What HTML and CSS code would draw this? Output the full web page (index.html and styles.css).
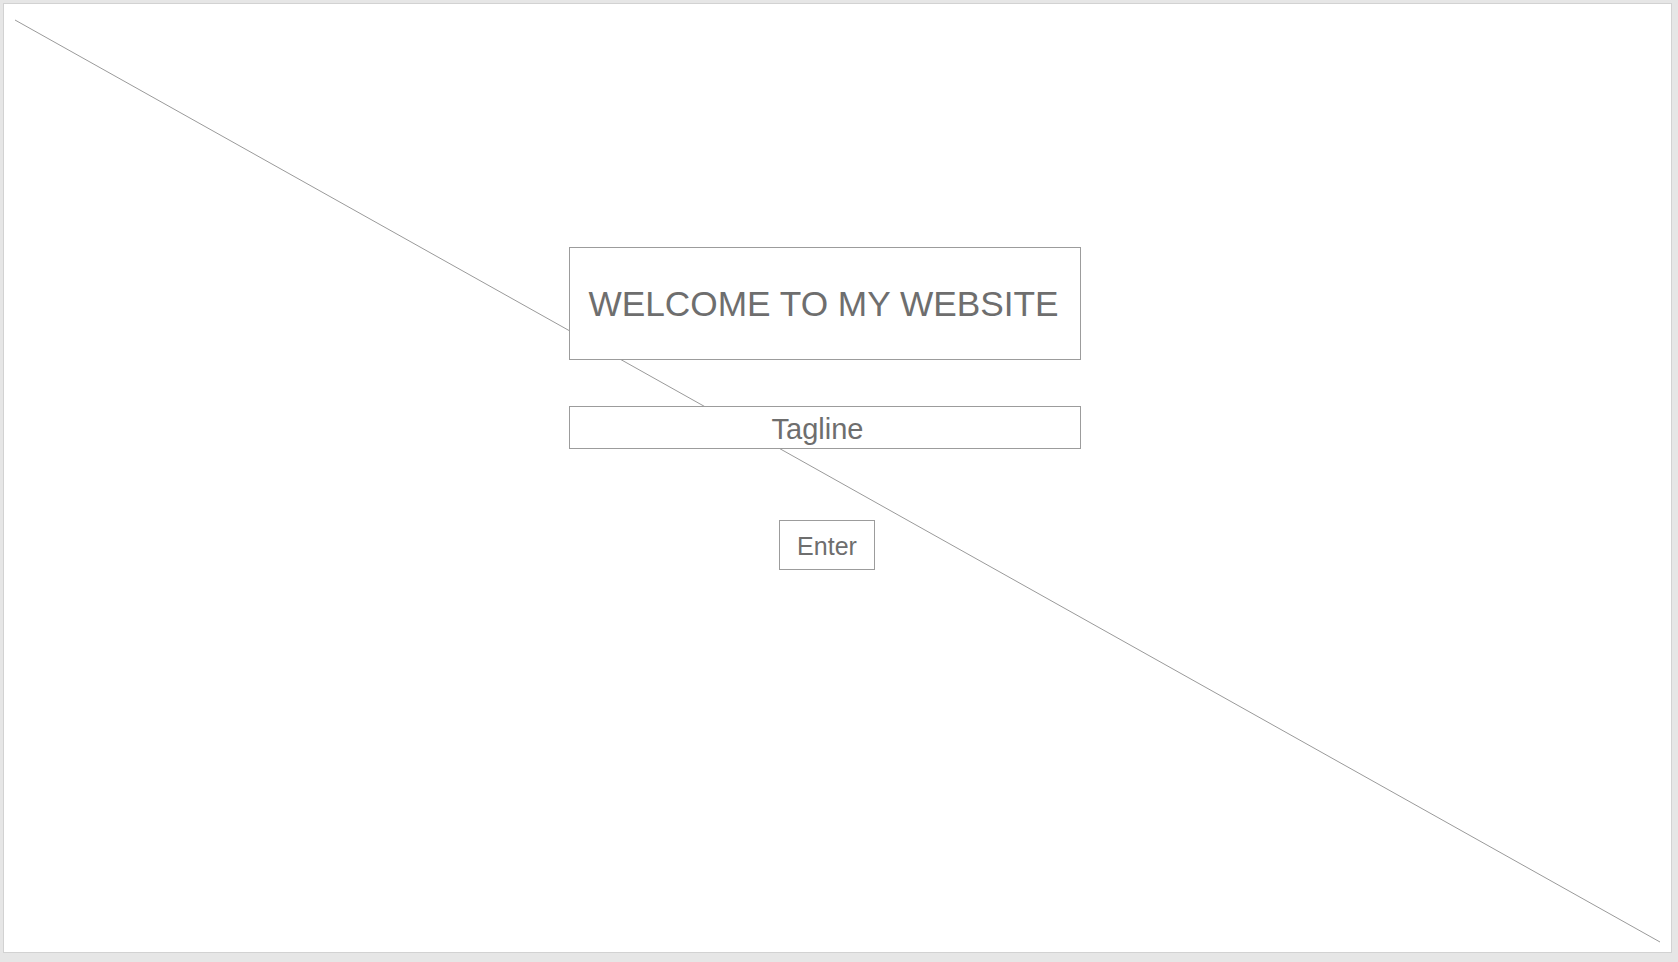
FILE: index.html
```html
<!DOCTYPE html>
<html lang="en">
<head>
<meta charset="utf-8">
<title>Welcome</title>
<link rel="stylesheet" href="styles.css">
</head>
<body>
<div class="frame">
  <svg class="diagonal" width="1666" height="948" viewBox="0 0 1666 948" aria-hidden="true">
    <line x1="11" y1="16" x2="1656" y2="938" stroke="#9a9a9a" stroke-width="1"/>
  </svg>
  <div class="column">
    <div class="title-box">WELCOME TO MY WEBSITE</div>
    <div class="tagline-box"><span class="tagline-text">Tagline</span></div>
    <button class="enter" type="button"><span class="enter-text">Enter</span></button>
  </div>
</div>
</body>
</html>
```
FILE: styles.css
```css
html, body {
  margin: 0;
  padding: 0;
}
body {
  background: #e6e6e6;
  width: 1678px;
  height: 962px;
  overflow: hidden;
  font-family: "Liberation Sans", Arial, sans-serif;
  color: #6e6e6e;
}
.frame {
  position: relative;
  box-sizing: border-box;
  margin: 3px 0 0 3px;
  width: 1669px;
  height: 950px;
  background: #ffffff;
  border: 1px solid #d2d2d2;
  padding: 243px 0 0 565px;
}
.diagonal {
  position: absolute;
  left: 0;
  top: 0;
}
.column {
  position: relative;
  width: 512px;
  display: flex;
  flex-direction: column;
  align-items: center;
}
.title-box {
  box-sizing: border-box;
  width: 512px;
  height: 113px;
  border: 1px solid #9c9c9c;
  background: #ffffff;
  display: flex;
  align-items: center;
  justify-content: center;
  font-size: 35.25px;
  padding-right: 3px;
}
.tagline-box {
  box-sizing: border-box;
  margin-top: 46px;
  width: 512px;
  height: 43px;
  border: 1px solid #9c9c9c;
  background: #ffffff;
  display: flex;
  align-items: center;
  justify-content: center;
  font-size: 29px;
}
.tagline-text {
  margin-right: 15px;
  padding-top: 3px;
}
.enter {
  box-sizing: border-box;
  margin-top: 71px;
  margin-left: 4px;
  width: 96px;
  height: 50px;
  border: 1px solid #9c9c9c;
  background: #ffffff;
  font-family: "Liberation Sans", Arial, sans-serif;
  font-size: 25px;
  color: #6e6e6e;
  padding: 0;
  display: flex;
  align-items: center;
  justify-content: center;
}
.enter-text {
  padding-top: 3px;
}
```
